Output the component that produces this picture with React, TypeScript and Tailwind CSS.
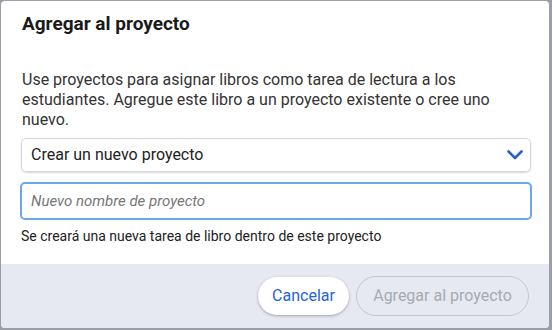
export default function App() {
  return (
    <div
      className="w-[552px] h-[330px] bg-[#9a9ea6] pt-px pl-px overflow-hidden"
      style={{ fontFamily: "Roboto, 'Noto Sans', sans-serif" }}
    >
      <div className="w-[548px] h-[327px] bg-white rounded-[4px] overflow-hidden flex flex-col">
        <div className="pl-[20px] pr-[18px] pt-[11px]">
          <h2 className="text-[19px] leading-[24px] font-bold text-[#1a1a1a] pl-px">
            Agregar al proyecto
          </h2>
          <p className="mt-[34px] text-[16px] leading-[20px] text-[#333] pl-px pr-[40px]">
            Use proyectos para asignar libros como tarea de lectura a los
            estudiantes. Agregue este libro a un proyecto existente o cree uno
            nuevo.
          </p>
          <div className="mt-[8px] h-[34px] border border-[#d4d6dc] rounded-[5px] shadow-[0_1px_2px_rgba(0,0,0,0.15)] flex items-center justify-between pl-[9px] pr-[7px]">
            <span className="text-[16px] text-[#222]">Crear un nuevo proyecto</span>
            <svg width="16" height="10" viewBox="0 0 16 10" fill="none">
              <path
                d="M1.5 1.5 L8 8 L14.5 1.5"
                stroke="#2563c9"
                strokeWidth="2.6"
                strokeLinecap="round"
                strokeLinejoin="round"
              />
            </svg>
          </div>
          <div className="mt-[10px] -mx-px h-[38px] border-2 border-[#6aa8ee] rounded-[5px] flex items-center pl-[9px]">
            <span className="text-[15px] italic text-[#777]">Nuevo nombre de proyecto</span>
          </div>
          <p className="mt-[7px] text-[14px] leading-[18px] text-[#222]">
            Se creará una nueva tarea de libro dentro de este proyecto
          </p>
        </div>
        <div className="mt-auto h-[64px] bg-[#e6e9f0] flex items-center justify-end gap-[7px] pr-[20px]">
          <button className="h-[38px] w-[91px] rounded-full bg-white text-[#2563d9] text-[16px] shadow-[0_1px_3px_rgba(0,0,0,0.3)]">
            Cancelar
          </button>
          <button className="h-[40px] w-[173px] rounded-full border border-[#c4c6cc] text-[#a8aab0] text-[16px]">
            Agregar al proyecto
          </button>
        </div>
      </div>
    </div>
  );
}
